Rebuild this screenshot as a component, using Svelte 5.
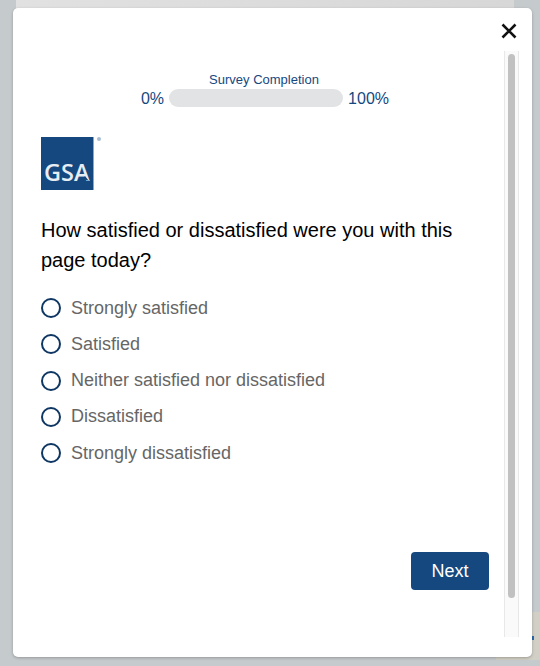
<script lang="ts">
	const options = [
		'Strongly satisfied',
		'Satisfied',
		'Neither satisfied nor dissatisfied',
		'Dissatisfied',
		'Strongly dissatisfied'
	];
	let answer = $state('');
</script>

<div class="page">
	<div class="band"></div>
	<div class="corner"><i class="dot"></i></div>

	<div class="modal">
		<button type="button" class="close" aria-label="Close">
			<svg width="16" height="16" viewBox="0 0 16 16">
				<path d="M1.5 1.5 14.5 14.5M14.5 1.5 1.5 14.5" stroke="#111" stroke-width="2.6" fill="none" />
			</svg>
		</button>

		<div class="body">
			<div class="content">
				<div class="progress">
					<div class="progress-label">Survey Completion</div>
					<div class="progress-row">
						<span class="pct">0%</span>
						<div class="bar"></div>
						<span class="pct">100%</span>
					</div>
				</div>

				<div class="logo-row">
					<div class="logo">
						<span>GSA</span>
						<svg class="notch" width="8" height="6" viewBox="0 0 8 6">
							<path d="M0 6 4 1 8 6 4 4.4Z" fill="#15487f" />
						</svg>
					</div>
					<i class="reg"></i>
				</div>

				<h2>How satisfied or dissatisfied were you with this page today?</h2>

				<div class="options">
					{#each options as opt}
						<label>
							<input type="radio" name="q" value={opt} bind:group={answer} />
							<span>{opt}</span>
						</label>
					{/each}
				</div>

				<div class="actions">
					<button type="button" class="next">Next</button>
				</div>
			</div>

			<div class="track">
				<div class="thumb"></div>
			</div>
		</div>
	</div>
</div>

<style>
	:global(body) {
		margin: 0;
		background: #c5cacd;
		font-family: 'Liberation Sans', Arial, sans-serif;
	}

	.page {
		position: relative;
		height: 666px;
		box-sizing: border-box;
		padding: 8px 8px 9px 13px;
		overflow: hidden;
	}

	.band {
		position: absolute;
		left: 16px;
		top: 0;
		width: 498px;
		height: 8px;
		background: linear-gradient(90deg, #e0e1e0, #d6d7d6);
	}

	.corner {
		position: absolute;
		right: 0;
		top: 612px;
		width: 44px;
		height: 48px;
		background: #d2cfc6;
	}

	.dot {
		position: absolute;
		left: 36px;
		top: 24px;
		width: 2px;
		height: 4px;
		background: #2a69b0;
	}

	.modal {
		position: relative;
		height: 100%;
		background: #fff;
		border-radius: 5px;
		box-shadow: 0 1px 3px rgba(0, 0, 0, 0.25);
		padding: 43px 13px 20px 28px;
		box-sizing: border-box;
	}

	.close {
		position: absolute;
		top: 15px;
		right: 15px;
		width: 16px;
		height: 16px;
		padding: 0;
		border: none;
		background: none;
		line-height: 0;
	}

	.body {
		display: flex;
		height: 100%;
	}

	.content {
		flex: 1;
		min-width: 0;
		display: flex;
		flex-direction: column;
		padding-right: 15px;
	}

	.progress {
		padding-top: 21px;
		text-align: center;
		color: #15487f;
	}

	.progress-label {
		font-size: 13px;
		line-height: 16px;
		margin-right: 2px;
	}

	.progress-row {
		display: flex;
		justify-content: center;
		align-items: center;
		gap: 5px;
		height: 18px;
		margin-top: 1px;
		font-size: 16px;
	}

	.pct {
		padding-top: 2px;
	}

	.bar {
		width: 174px;
		height: 18px;
		border-radius: 9px;
		background: #e2e3e5;
	}

	.logo-row {
		display: flex;
		align-items: flex-start;
		gap: 3px;
		margin-top: 30px;
	}

	.logo {
		position: relative;
		width: 53px;
		height: 53px;
		box-sizing: border-box;
		background: #15487f;
		border-right: 1px solid #8ea6c2;
		color: #e8edf3;
		font-family: 'Open Sans', sans-serif;
		font-size: 23.5px;
		font-weight: 600;
		line-height: 24px;
		padding: 23px 0 0 3px;
	}

	.notch {
		position: absolute;
		left: 40px;
		top: 38px;
	}

	.reg {
		width: 4px;
		height: 4px;
		border-radius: 50%;
		background: #a9bcd2;
	}

	h2 {
		margin: 25px 0 0;
		font-size: 20px;
		font-weight: 400;
		line-height: 30px;
		color: #000;
	}

	.options {
		display: flex;
		flex-direction: column;
		gap: 12.3px;
		margin-top: 21px;
	}

	label {
		display: flex;
		align-items: center;
		gap: 10px;
		height: 24px;
		font-size: 18px;
		color: #666;
	}

	input {
		appearance: none;
		flex: none;
		width: 20px;
		height: 20px;
		margin: 0;
		border: 2px solid #0f3763;
		border-radius: 50%;
		background: #fff;
	}

	input:checked {
		background: radial-gradient(circle, #0f3763 0 5px, #fff 5.5px);
	}

	.actions {
		display: flex;
		justify-content: flex-end;
		margin-top: auto;
		padding-bottom: 47px;
	}

	.next {
		width: 78px;
		height: 38px;
		border: none;
		border-radius: 4px;
		background: #15487f;
		color: #fff;
		font: 18px 'Liberation Sans', Arial, sans-serif;
	}

	.track {
		flex: none;
		width: 15px;
		box-sizing: border-box;
		padding: 3px 3px 0 3px;
		background: #fafafa;
		border: solid #e8e8e8;
		border-width: 0 1px;
	}

	.thumb {
		height: 544px;
		border-radius: 4px;
		background: #c1c1c1;
	}
</style>
